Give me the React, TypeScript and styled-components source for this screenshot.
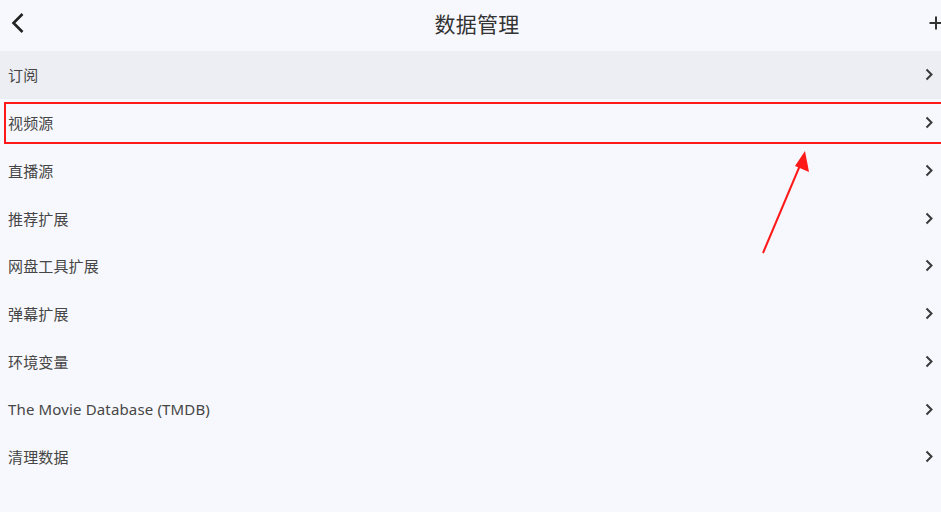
import styled, { createGlobalStyle } from "styled-components";

const Global = createGlobalStyle`
  html, body { margin: 0; padding: 0; background: #f7f8fd; overflow: hidden; }
  * { box-sizing: border-box; }
`;

const Page = styled.div`
  width: 954px;
  height: 512px;
  position: relative;
  background: #f7f8fd;
  font-family: "Noto Sans", "Noto Sans CJK SC", sans-serif;
`;

const Header = styled.header`
  height: 51px;
  padding-bottom: 5px;
  display: grid;
  grid-template-columns: 60px 1fr 60px;
  align-items: center;
`;

const IconBtn = styled.div<{ $align: "start" | "end" }>`
  display: flex;
  justify-content: ${({ $align }) => ($align === "start" ? "flex-start" : "flex-end")};
  padding: ${({ $align }) => ($align === "start" ? "0 0 0 11px" : "0 11px 0 0")};
  color: #222;
`;

const Title = styled.h1`
  margin: 0;
  text-align: center;
  font-size: 21px;
  font-weight: 400;
  color: #333;
  letter-spacing: 0.3px;
`;

const List = styled.ul`
  list-style: none;
  margin: 0;
  padding: 0;
`;

const Row = styled.li<{ $active?: boolean }>`
  height: 47.75px;
  display: flex;
  align-items: center;
  justify-content: space-between;
  padding: 0 21px 0 8px;
  background: ${({ $active }) => ($active ? "#edeef3" : "transparent")};
  font-size: 15px;
  letter-spacing: 0.15px;
  color: #464646;
`;

const Highlight = styled.div`
  position: absolute;
  left: 4px;
  top: 102px;
  width: 960px;
  height: 42px;
  border: 2px solid #ff1a1a;
  pointer-events: none;
`;

const Arrow = styled.svg`
  position: absolute;
  left: 750px;
  top: 145px;
  overflow: visible;
`;

const items = [
  "订阅",
  "视频源",
  "直播源",
  "推荐扩展",
  "网盘工具扩展",
  "弹幕扩展",
  "环境变量",
  "The Movie Database (TMDB)",
  "清理数据",
];

function Chevron() {
  return (
    <svg width="8" height="13" viewBox="0 0 8 13">
      <path d="M1.5 1.5 L6.5 6.5 L1.5 11.5" fill="none" stroke="#3a3a3a" strokeWidth="2" />
    </svg>
  );
}

export default function App() {
  return (
    <Page>
      <Global />
      <Header>
        <IconBtn $align="start">
          <svg width="14" height="22" viewBox="0 0 14 22">
            <path d="M11.5 2 L2.5 11 L11.5 20" fill="none" stroke="#222" strokeWidth="2.6" />
          </svg>
        </IconBtn>
        <Title>数据管理</Title>
        <IconBtn $align="end">
          <svg width="14" height="14" viewBox="0 0 14 14">
            <path d="M7 0.5 V13.5 M0.5 7 H13.5" stroke="#333" strokeWidth="2" />
          </svg>
        </IconBtn>
      </Header>
      <List>
        {items.map((t, i) => (
          <Row key={t} $active={i === 0}>
            <span>{t}</span>
            <Chevron />
          </Row>
        ))}
      </List>
      <Highlight />
      <Arrow width="70" height="110" viewBox="0 0 70 110">
        <line x1="13" y1="108" x2="51" y2="18" stroke="#ff1a1a" strokeWidth="2" />
        <polygon points="55,6 59,27 45,21" fill="#ff1a1a" />
      </Arrow>
    </Page>
  );
}
